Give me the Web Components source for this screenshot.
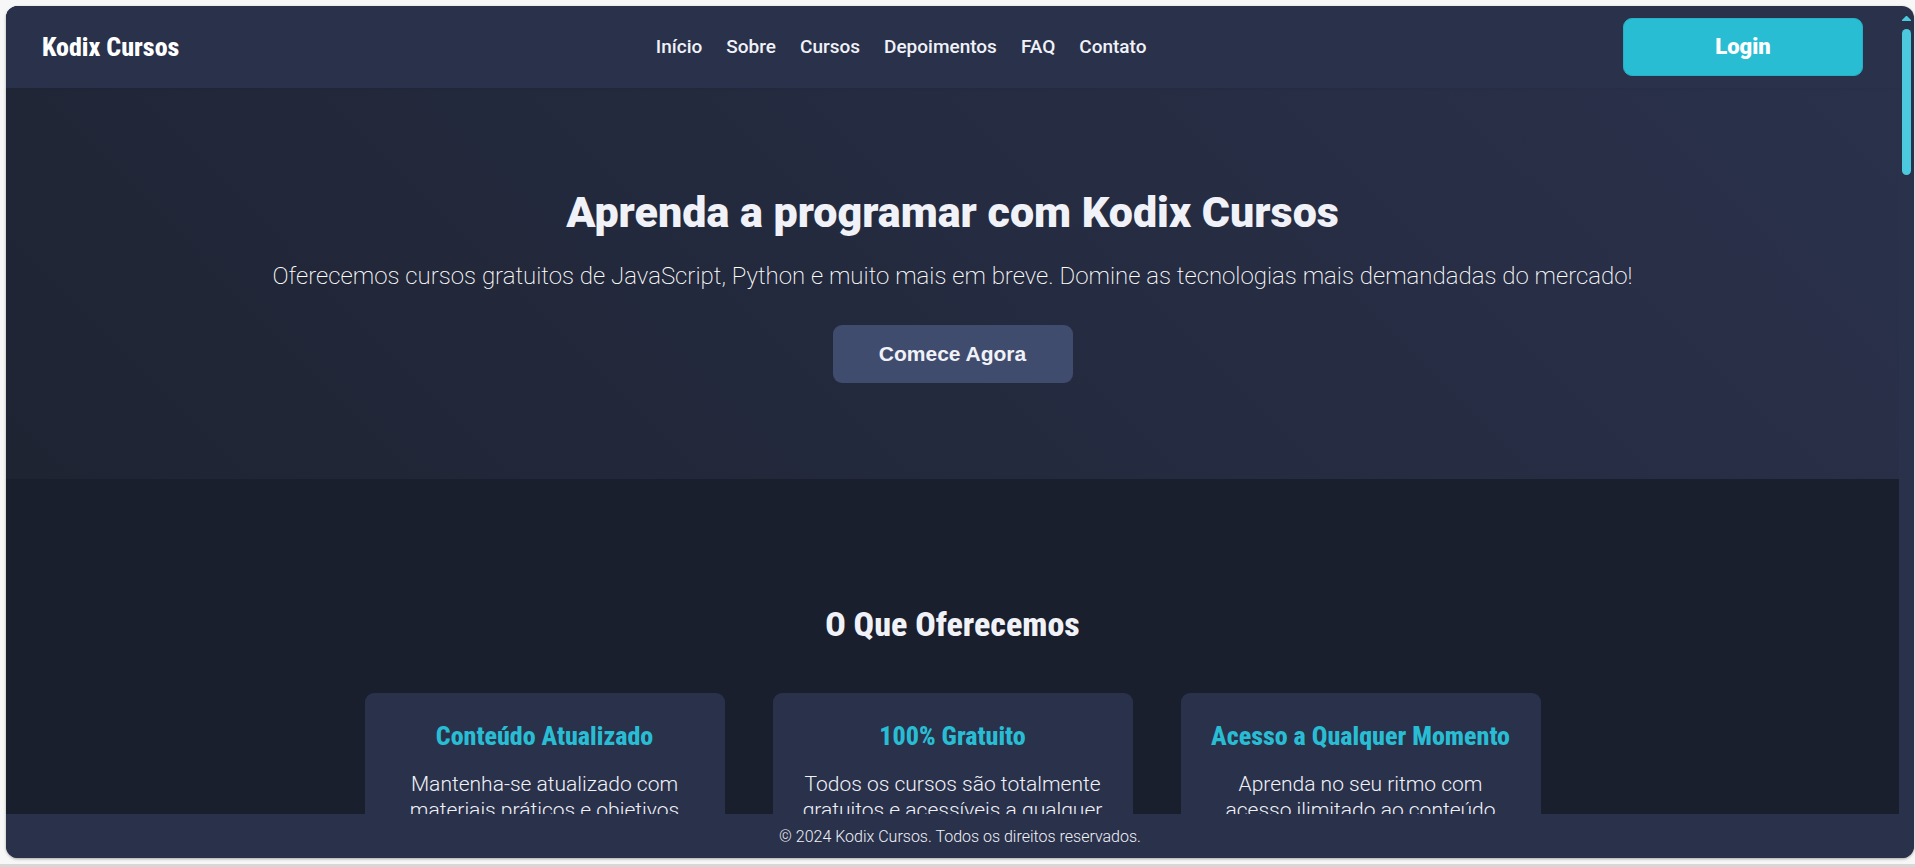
<!DOCTYPE html>
<html lang="pt-BR">
<head>
<meta charset="utf-8">
<title>Kodix Cursos</title>
<style>
  html, body { height: 100%; }
  body {
    margin: 0;
    background: #f7f7f7;
    color: #f0f2f8;
    font-family: Roboto, "Liberation Sans", sans-serif;
    --panel: #2a314b;
    --accent: #29bdd4;
    --condensed: "Roboto Condensed", Roboto, sans-serif;
  }
</style>
</head>
<body>
<kodix-app>
  <kodix-header slot="header" brand="Kodix Cursos">
    <kodix-link href="#inicio">Início</kodix-link>
    <kodix-link href="#sobre">Sobre</kodix-link>
    <kodix-link href="#cursos">Cursos</kodix-link>
    <kodix-link href="#depoimentos">Depoimentos</kodix-link>
    <kodix-link href="#faq">FAQ</kodix-link>
    <kodix-link href="#contato">Contato</kodix-link>
    <kodix-button slot="action" variant="accent">Login</kodix-button>
  </kodix-header>
  <kodix-hero>
    <span slot="title">Aprenda a programar com Kodix Cursos</span>
    <span slot="lead">Oferecemos cursos gratuitos de JavaScript, Python e muito mais em breve. Domine as tecnologias mais demandadas do mercado!</span>
    <kodix-button>Comece Agora</kodix-button>
  </kodix-hero>
  <kodix-section heading="O Que Oferecemos">
    <kodix-card heading="Conteúdo Atualizado">Mantenha-se atualizado com materiais práticos e objetivos</kodix-card>
    <kodix-card heading="100% Gratuito">Todos os cursos são totalmente gratuitos e acessíveis a qualquer</kodix-card>
    <kodix-card heading="Acesso a Qualquer Momento">Aprenda no seu ritmo com acesso ilimitado ao conteúdo</kodix-card>
  </kodix-section>
  <kodix-footer slot="footer">© 2024 Kodix Cursos. Todos os direitos reservados.</kodix-footer>
</kodix-app>

<script>
const define = (name, render) => customElements.define(name, class extends HTMLElement {
  constructor() {
    super();
    this.attachShadow({ mode: 'open' });
  }
  connectedCallback() {
    this.shadowRoot.innerHTML = render(this);
  }
});

define('kodix-app', () => `
  <style>
    :host { display: flex; flex-direction: column; height: 100vh; box-sizing: border-box; padding: 6px 1px 0 6px; }
    .window {
      flex: 1; min-height: 0; display: grid; grid-template: minmax(0, 1fr) auto / minmax(0, 1fr) auto;
      background: var(--panel); border-radius: 12px; overflow: hidden; box-shadow: 0 1px 3px #0005;
    }
    .view { background: #1a1f2d; overflow: hidden; }
    ::slotted([slot=footer]) { grid-column: 1 / -1; }
    .edge { height: 3px; margin: 6px -1px 0 -6px; background: #d7d9d9; }
  </style>
  <div class="window">
    <main class="view"><slot name="header"></slot><slot></slot></main>
    <kodix-scrollbar></kodix-scrollbar>
    <slot name="footer"></slot>
  </div>
  <div class="edge"></div>`);

define('kodix-scrollbar', () => `
  <style>
    :host { display: flex; flex-direction: column; align-items: center; gap: 8px; width: 15px; padding-top: 10px; box-sizing: border-box; }
    svg { display: block; fill: #4dc9df; }
    .thumb { width: 9px; height: 146px; border-radius: 5px; background: #4dc9df; }
  </style>
  <svg width="9" height="5" viewBox="0 0 9 5" aria-hidden="true"><path d="M4 0h1l4 4v1H0V4z"/></svg>
  <div class="thumb"></div>`);

define('kodix-header', el => `
  <style>
    :host {
      display: flex; justify-content: space-between; align-items: center; position: relative;
      padding: 12px 36px; background: var(--panel); box-shadow: 0 1px 3px #0000000d;
    }
    .brand { font: 800 26px/32px var(--condensed); color: #fff; text-decoration: none; }
    nav { display: flex; gap: 24px; }
  </style>
  <a class="brand" href="#inicio">${el.getAttribute('brand')}</a>
  <nav><slot></slot></nav>
  <slot name="action"></slot>`);

define('kodix-link', el => `
  <style>
    :host { display: block; }
    a { font-weight: 500; font-size: 19px; line-height: 24px; color: #f0f2f8; text-decoration: none; }
  </style>
  <a href="${el.getAttribute('href')}"><slot></slot></a>`);

define('kodix-button', () => `
  <style>
    :host { display: inline-block; vertical-align: top; }
    button {
      display: block; width: 240px; height: 58px; border: 0; border-radius: 9px; padding: 0;
      background: #404c6e; color: #f0f2f8; font: 700 21px/24px "Liberation Sans", Arial, sans-serif;
    }
    :host([variant=accent]) button {
      background: var(--accent); color: #fff; border: 1px solid #29aec5;
      font: 900 22px/24px Roboto, sans-serif;
    }
  </style>
  <button type="button"><slot></slot></button>`);

define('kodix-hero', () => `
  <style>
    :host { display: block; padding: 96px 24px; text-align: center; background: linear-gradient(45deg, #1f2433, #2a314b); }
    h1 { margin: 0 0 20px; font-weight: 900; font-size: 43px; line-height: 56px; }
    p { margin: 0 0 33px; font-weight: 200; font-size: 24px; line-height: 32px; color: #fff; }
  </style>
  <h1><slot name="title"></slot></h1>
  <p><slot name="lead"></slot></p>
  <slot></slot>`);

define('kodix-section', el => `
  <style>
    :host { display: block; padding: 124px 24px; }
    h2 { margin: 0 0 48px; text-align: center; font: 800 34px/42px var(--condensed); }
    .cards { display: flex; justify-content: center; gap: 48px; }
  </style>
  <h2>${el.getAttribute('heading')}</h2>
  <div class="cards"><slot></slot></div>`);

define('kodix-card', el => `
  <style>
    :host {
      display: block; flex: 0 1 360px; box-sizing: border-box; padding: 24px;
      text-align: center; background: var(--panel); border-radius: 9px;
    }
    h3 { margin: 0 0 16px; font: 800 26px/38px var(--condensed); color: var(--accent); }
    p { margin: 0; font-weight: 300; font-size: 21px; line-height: 26px; }
  </style>
  <h3>${el.getAttribute('heading')}</h3>
  <p><slot></slot></p>`);

define('kodix-footer', () => `
  <style>
    :host { display: block; background: var(--panel); text-align: center; }
    footer { padding: 11px 0 9px; font-weight: 300; font-size: 16px; line-height: 24px; }
  </style>
  <footer><slot></slot></footer>`);
</script>
</body>
</html>
